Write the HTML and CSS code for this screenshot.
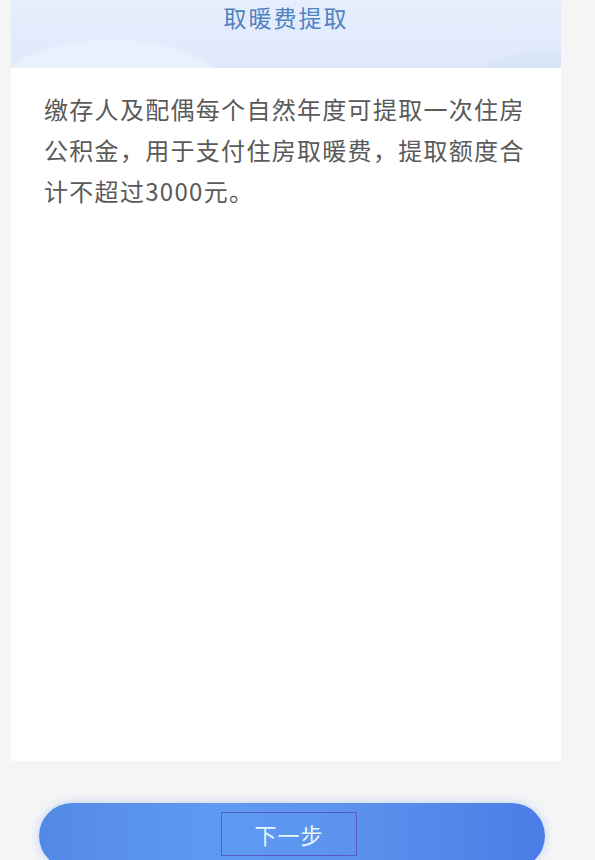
FILE: index.html
```html
<!DOCTYPE html>
<html lang="zh-CN">
<head>
    <meta charset="UTF-8">
    <meta name="viewport" content="width=device-width, initial-scale=1.0">
    <title>取暖费提取</title>
    <link rel="stylesheet" href="styles.css">
</head>

<body>
    <div class="page">
        <div class="card">
            <div class="card-head">
                <h2 class="card-title">取暖费提取</h2>
            </div>
            <div class="card-body">
                <p class="desc">缴存人及配偶每个自然年度可提取一次住房公积金，用于支付住房取暖费，提取额度合计不超过3000元。</p>
            </div>
        </div>

        <div class="footer">
            <button type="button" class="next-btn"><span class="next-label">下一步</span></button>
        </div>
    </div>
</body>
</html>
```

FILE: styles.css
```css
html, body {
    margin: 0;
    height: 860px;
    overflow: hidden;
}
body {
    font-family: "Noto Sans CJK SC", "Noto Sans", sans-serif;
    background-color: #f5f5f6;
}
.page {
    padding: 0 34px 0 11px;
}
.card {
    height: 761px;
    background-color: #fff;
}
.card-head {
    height: 68px;
    background-color: #e2ecfb;
    /* 云朵背景 */
    background-image:
        radial-gradient(ellipse 190px 88px at 100px 94px, #e9f1fd 60%, rgba(233,241,253,0) 63%),
        radial-gradient(ellipse 170px 72px at 545px 96px, #d9e6f8 60%, rgba(217,230,248,0) 64%),
        linear-gradient(180deg, #e5eefc 0%, #dfe9fa 100%);
    text-align: center;
}
.card-title {
    margin: 0;
    font-size: 23px;
    font-weight: 400;
    line-height: 34px;
    letter-spacing: 2px;
    color: #5081c2;
}
.card-body {
    padding: 20px 27px 0 33px;
}
.desc {
    margin: 0;
    font-size: 24px;
    line-height: 41px;
    letter-spacing: 1.3px;
    color: #5a5a5a;
}
.footer {
    padding: 42px 16px 0 28px;
}
.next-btn {
    display: flex;
    align-items: center;
    justify-content: center;
    width: 506px;
    height: 66px;
    padding: 0 6px 4px 0;
    border: none;
    border-radius: 33px;
    background: linear-gradient(90deg, #5389e6 0%, #5f9af2 35%, #5b93ee 60%, #4a7de6 100%);
    box-shadow: 0 0 10px rgba(120, 160, 235, 0.45);
    cursor: pointer;
}
.next-label {
    display: inline-block;
    width: 134px;
    height: 42px;
    line-height: 42px;
    border: 1px solid #5a5cc4;
    font-family: "Noto Sans CJK SC", "Noto Sans", sans-serif;
    font-size: 22px;
    letter-spacing: 1px;
    color: #e9f5ff;
}
```
